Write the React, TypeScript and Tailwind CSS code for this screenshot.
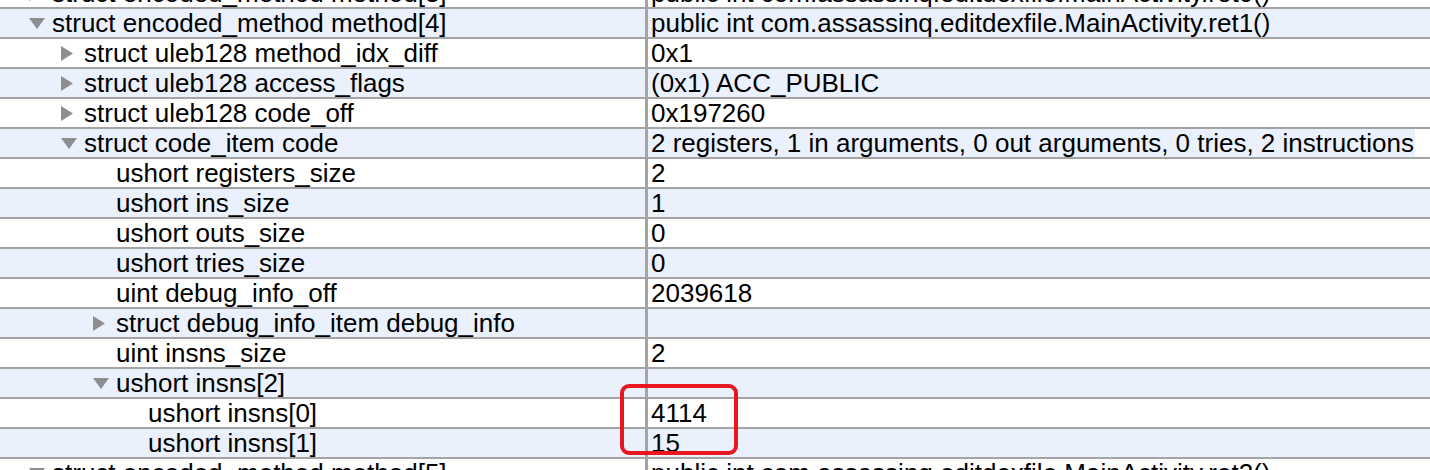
import clsx from 'clsx'

type Toggle = 'open' | 'closed' | null

interface Row {
  level: number
  toggle: Toggle
  name: string
  value: string
}

const rows: Row[] = [
  { level: 0, toggle: 'closed', name: 'struct encoded_method method[3]', value: 'public int com.assassinq.editdexfile.MainActivity.ret0()' },
  { level: 0, toggle: 'open', name: 'struct encoded_method method[4]', value: 'public int com.assassinq.editdexfile.MainActivity.ret1()' },
  { level: 1, toggle: 'closed', name: 'struct uleb128 method_idx_diff', value: '0x1' },
  { level: 1, toggle: 'closed', name: 'struct uleb128 access_flags', value: '(0x1) ACC_PUBLIC' },
  { level: 1, toggle: 'closed', name: 'struct uleb128 code_off', value: '0x197260' },
  { level: 1, toggle: 'open', name: 'struct code_item code', value: '2 registers, 1 in arguments, 0 out arguments, 0 tries, 2 instructions' },
  { level: 2, toggle: null, name: 'ushort registers_size', value: '2' },
  { level: 2, toggle: null, name: 'ushort ins_size', value: '1' },
  { level: 2, toggle: null, name: 'ushort outs_size', value: '0' },
  { level: 2, toggle: null, name: 'ushort tries_size', value: '0' },
  { level: 2, toggle: null, name: 'uint debug_info_off', value: '2039618' },
  { level: 2, toggle: 'closed', name: 'struct debug_info_item debug_info', value: '' },
  { level: 2, toggle: null, name: 'uint insns_size', value: '2' },
  { level: 2, toggle: 'open', name: 'ushort insns[2]', value: '' },
  { level: 3, toggle: null, name: 'ushort insns[0]', value: '4114' },
  { level: 3, toggle: null, name: 'ushort insns[1]', value: '15' },
  { level: 0, toggle: 'open', name: 'struct encoded_method method[5]', value: 'public int com.assassinq.editdexfile.MainActivity.ret2()' },
]

const indent = ['pl-[29px]', 'pl-[61px]', 'pl-[93px]', 'pl-[125px]']

function Disclosure({ toggle }: { toggle: Toggle }) {
  return (
    <span className="w-[23px] shrink-0 flex items-center">
      {toggle === 'open' && (
        <svg width="16" height="11" viewBox="0 0 16 11">
          <path d="M0 0 L16 0 L8 11 Z" fill="#8e8e8e" />
        </svg>
      )}
      {toggle === 'closed' && (
        <svg width="12" height="15" viewBox="0 0 12 15">
          <path d="M0 0 L12 7.5 L0 15 Z" fill="#8e8e8e" />
        </svg>
      )}
    </span>
  )
}

export default function App() {
  return (
    <div className="relative w-[1430px] h-[470px] overflow-hidden bg-white text-black font-['Liberation_Sans',Arial,sans-serif] text-[26px] leading-[28px]">
      <div className="-mt-[21px]">
        {rows.map((row, i) => (
          <div
            key={row.name}
            className={clsx(
              'flex h-[30px] border-b-2 border-[#a4a4a4]',
              i % 2 === 1 ? 'bg-[#eaf0fc]' : 'bg-white',
            )}
          >
            <div className={clsx('w-[645px] shrink-0 flex items-center whitespace-nowrap overflow-hidden', indent[row.level])}>
              <Disclosure toggle={row.toggle} />
              <span>{row.name}</span>
            </div>
            <div className="w-[3px] shrink-0 bg-[#a4a4a4]" />
            <div className="flex-1 flex items-center pl-[3px] whitespace-nowrap overflow-hidden">
              <span className="flex-1">{row.value}</span>
              {row.name === 'struct code_item code' && <span className="w-[15px] self-stretch bg-white" />}
            </div>
          </div>
        ))}
      </div>
      {/* highlight around the insns values */}
      <div className="absolute left-[620px] top-[384px] w-[118px] h-[71px] rounded-[9px] border-4 border-[#e8161e]" />
    </div>
  )
}
